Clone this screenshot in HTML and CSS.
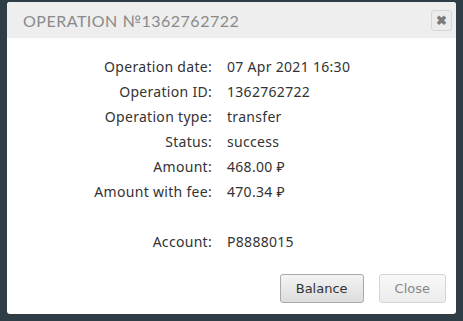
FILE: index.html
```html
<!DOCTYPE html>
<html>
<head>
<meta name="viewport" content="width=device-width, initial-scale=1">
<link rel="stylesheet" href="styles.css">
</head>
<body>
  <div class="dialog">
    <div class="dialog-head">
      <span class="dialog-title">Operation №1362762722</span>
      <button class="close-x" title="Close">&#10006;</button>
    </div>

    <div class="dialog-body">
      <div class="info">
        <span class="label">Operation date:</span><span class="value">07 Apr 2021 16:30</span>
        <span class="label">Operation ID:</span><span class="value">1362762722</span>
        <span class="label">Operation type:</span><span class="value">transfer</span>
        <span class="label">Status:</span><span class="value">success</span>
        <span class="label">Amount:</span><span class="value">468.00 &#8381;</span>
        <span class="label">Amount with fee:</span><span class="value">470.34 &#8381;</span>
        <span class="label"></span><span class="value"></span>
        <span class="label">Account:</span><span class="value">P8888015</span>
      </div>
    </div>

    <div class="dialog-foot">
      <button class="btn">Balance</button>
      <button class="btn btn-light">Close</button>
    </div>
  </div>
</body>
</html>
```
FILE: styles.css
```css
body {
    margin: 0;
    background-color: #2f3e46;
    font-family: "Noto Sans", Arial, sans-serif;
}

.dialog {
    margin: 2px 7px 0 7px;
    width: 449px;
    height: 312px;
    background: #fff;
    border-radius: 3px;
    display: flex;
    flex-direction: column;
    overflow: hidden;
}

.dialog-head {
    height: 36px;
    background: #eeeeee;
    display: flex;
    align-items: center;
    justify-content: space-between;
    padding: 0 4px 0 16px;
}

.dialog-title {
    font-family: "Lato", sans-serif;
    font-size: 16px;
    letter-spacing: 0.5px;
    text-transform: uppercase;
    color: #8a8a8a;
}

.close-x {
    width: 21px;
    height: 21px;
    padding: 0;
    border: 1px solid #d6d6d6;
    border-radius: 3px;
    background: #ececec;
    color: #7a7a7a;
    font-size: 13px;
    line-height: 19px;
    font-weight: bold;
    cursor: pointer;
}

.dialog-body {
    flex: 1;
    padding-top: 16px;
}

.info {
    display: grid;
    grid-template-columns: 205px auto;
    column-gap: 15px;
    grid-auto-rows: 25px;
    align-items: center;
    font-size: 14px;
    letter-spacing: 0.3px;
    color: #333;
}

.label {
    text-align: right;
}

.dialog-foot {
    display: flex;
    justify-content: flex-end;
    gap: 15px;
    padding: 0 10px 11px 0;
}

.btn {
    height: 29px;
    padding: 0 15px;
    font-family: "DejaVu Sans", Verdana, sans-serif;
    font-size: 13px;
    color: #333;
    border: 1px solid #a9a9a9;
    border-radius: 3px;
    background: linear-gradient(#f4f4f4, #dcdcdc);
    cursor: pointer;
}

.btn-light {
    color: #888;
    border-color: #d4d4d4;
    background: linear-gradient(#f8f8f8, #ececec);
}
```
